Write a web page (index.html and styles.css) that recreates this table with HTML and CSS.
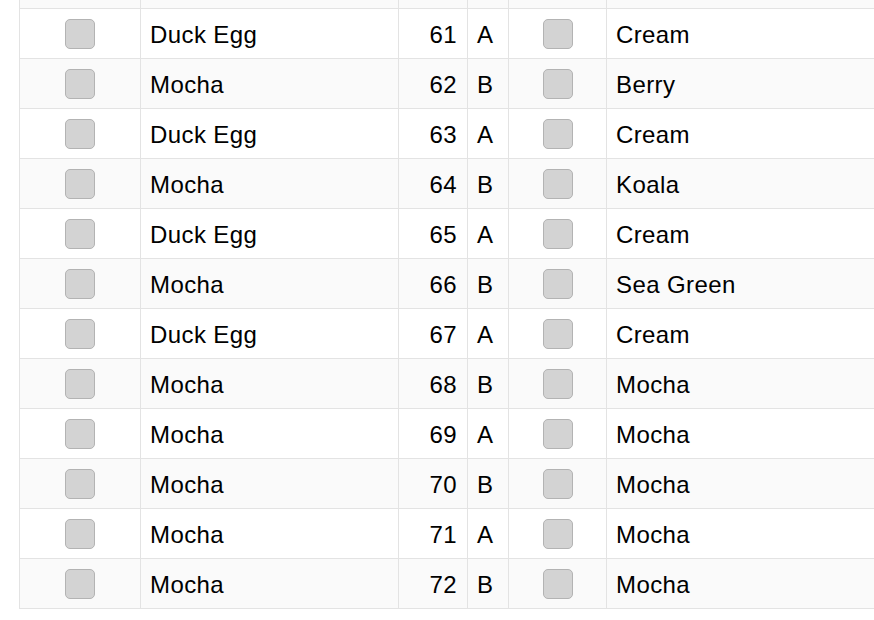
FILE: index.html
```html
<!DOCTYPE html>
<html>
<head>
<meta charset="utf-8">
<link rel="stylesheet" href="styles.css">
</head>
<body>
<div class="grid">
  <div class="row partial even"><div class="c"></div><div class="c"></div><div class="c"></div><div class="c"></div><div class="c"></div><div class="c"></div></div>
  <div class="row odd"><div class="c box"><span class="cb"></span></div><div class="c t">Duck Egg</div><div class="c t num">61</div><div class="c t">A</div><div class="c box"><span class="cb"></span></div><div class="c t">Cream</div></div>
  <div class="row even"><div class="c box"><span class="cb"></span></div><div class="c t">Mocha</div><div class="c t num">62</div><div class="c t">B</div><div class="c box"><span class="cb"></span></div><div class="c t">Berry</div></div>
  <div class="row odd"><div class="c box"><span class="cb"></span></div><div class="c t">Duck Egg</div><div class="c t num">63</div><div class="c t">A</div><div class="c box"><span class="cb"></span></div><div class="c t">Cream</div></div>
  <div class="row even"><div class="c box"><span class="cb"></span></div><div class="c t">Mocha</div><div class="c t num">64</div><div class="c t">B</div><div class="c box"><span class="cb"></span></div><div class="c t">Koala</div></div>
  <div class="row odd"><div class="c box"><span class="cb"></span></div><div class="c t">Duck Egg</div><div class="c t num">65</div><div class="c t">A</div><div class="c box"><span class="cb"></span></div><div class="c t">Cream</div></div>
  <div class="row even"><div class="c box"><span class="cb"></span></div><div class="c t">Mocha</div><div class="c t num">66</div><div class="c t">B</div><div class="c box"><span class="cb"></span></div><div class="c t">Sea Green</div></div>
  <div class="row odd"><div class="c box"><span class="cb"></span></div><div class="c t">Duck Egg</div><div class="c t num">67</div><div class="c t">A</div><div class="c box"><span class="cb"></span></div><div class="c t">Cream</div></div>
  <div class="row even"><div class="c box"><span class="cb"></span></div><div class="c t">Mocha</div><div class="c t num">68</div><div class="c t">B</div><div class="c box"><span class="cb"></span></div><div class="c t">Mocha</div></div>
  <div class="row odd"><div class="c box"><span class="cb"></span></div><div class="c t">Mocha</div><div class="c t num">69</div><div class="c t">A</div><div class="c box"><span class="cb"></span></div><div class="c t">Mocha</div></div>
  <div class="row even"><div class="c box"><span class="cb"></span></div><div class="c t">Mocha</div><div class="c t num">70</div><div class="c t">B</div><div class="c box"><span class="cb"></span></div><div class="c t">Mocha</div></div>
  <div class="row odd"><div class="c box"><span class="cb"></span></div><div class="c t">Mocha</div><div class="c t num">71</div><div class="c t">A</div><div class="c box"><span class="cb"></span></div><div class="c t">Mocha</div></div>
  <div class="row even"><div class="c box"><span class="cb"></span></div><div class="c t">Mocha</div><div class="c t num">72</div><div class="c t">B</div><div class="c box"><span class="cb"></span></div><div class="c t">Mocha</div></div>
</div>
</body>
</html>
```
FILE: styles.css
```css
html, body {
  margin: 0;
  padding: 0;
  overflow: hidden;
  background: #ffffff;
}
body {
  font-family: "Liberation Sans", Arial, sans-serif;
  font-size: 24px;
  letter-spacing: 0.4px;
  color: #000;
}
.grid {
  margin-left: 19px;
  width: 888px;
  border-left: 1px solid #e3e3e3;
}
.row {
  display: grid;
  grid-template-columns: 121px 258px 69px 41px 98px 300px;
  height: 50px;
}
.row.partial {
  height: 9px;
}
.odd { background: #ffffff; }
.even { background: #fafafa; }
.c {
  box-sizing: border-box;
  border-right: 1px solid #e3e3e3;
  border-bottom: 1px solid #e3e3e3;
  display: flex;
  align-items: center;
  overflow: hidden;
  white-space: nowrap;
}
.t {
  padding: 3px 9px 0 9px;
}
.num {
  justify-content: flex-end;
  padding-right: 10px;
}
.letter {
  padding-left: 8px;
}
.box {
  justify-content: center;
}
.cb {
  display: block;
  width: 30px;
  height: 30px;
  box-sizing: border-box;
  background: #d3d3d3;
  border: 1px solid #b3b3b3;
  border-radius: 5px;
}
```
